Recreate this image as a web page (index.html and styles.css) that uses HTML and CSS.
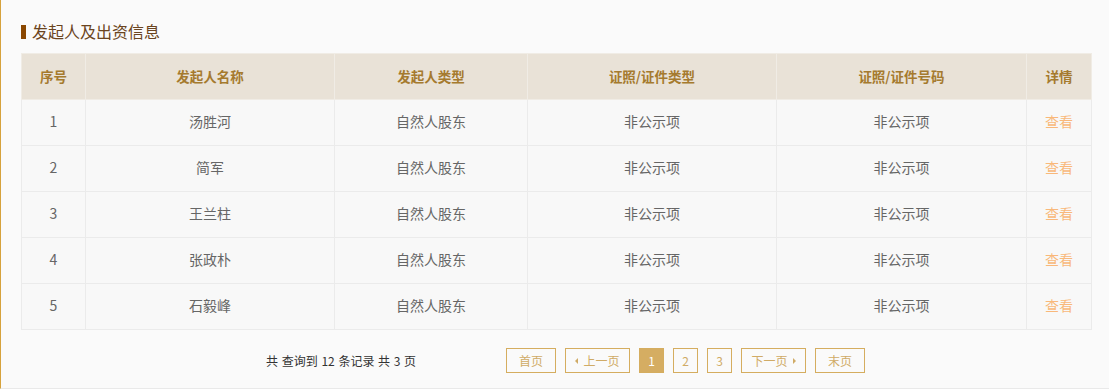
FILE: index.html
```html
<!DOCTYPE html>
<html lang="zh-CN">
<head>
<meta charset="utf-8">
<title>发起人及出资信息</title>
<link rel="stylesheet" href="styles.css">
</head>
<body>
<div class="panel">
  <h2 class="title"><span class="marker"></span>发起人及出资信息</h2>
  <table class="grid">
    <colgroup>
      <col class="c1"><col class="c2"><col class="c3"><col class="c4"><col class="c5"><col class="c6">
    </colgroup>
    <thead>
      <tr><th>序号</th><th>发起人名称</th><th>发起人类型</th><th>证照/证件类型</th><th>证照/证件号码</th><th>详情</th></tr>
    </thead>
    <tbody>
      <tr><td>1</td><td>汤胜河</td><td>自然人股东</td><td>非公示项</td><td>非公示项</td><td><a class="view">查看</a></td></tr>
      <tr><td>2</td><td>简军</td><td>自然人股东</td><td>非公示项</td><td>非公示项</td><td><a class="view">查看</a></td></tr>
      <tr><td>3</td><td>王兰柱</td><td>自然人股东</td><td>非公示项</td><td>非公示项</td><td><a class="view">查看</a></td></tr>
      <tr><td>4</td><td>张政朴</td><td>自然人股东</td><td>非公示项</td><td>非公示项</td><td><a class="view">查看</a></td></tr>
      <tr><td>5</td><td>石毅峰</td><td>自然人股东</td><td>非公示项</td><td>非公示项</td><td><a class="view">查看</a></td></tr>
    </tbody>
  </table>
  <div class="pager">
    <span class="count">共 查询到 12 条记录 共 3 页</span>
    <div class="pages">
      <a class="pg w50">首页</a>
      <a class="pg w65"><span class="tri tri-l"></span>上一页</a>
      <a class="pg num active">1</a>
      <a class="pg num">2</a>
      <a class="pg num">3</a>
      <a class="pg w65">下一页<span class="tri tri-r"></span></a>
      <a class="pg w50">末页</a>
    </div>
  </div>
</div>
</body>
</html>
```
FILE: styles.css
```css
html, body {
  margin: 0;
  padding: 0;
  background: #fafafa;
}
body {
  font-family: "Noto Sans CJK SC", "Liberation Sans", sans-serif;
  width: 1109px;
  height: 389px;
  overflow: hidden;
}
.panel {
  box-sizing: border-box;
  height: 389px;
  border-left: 1px solid #d6a23c;
  border-bottom: 1px solid #e9e9e9;
  padding: 21px 18px 0 20px;
}
.title {
  margin: 0;
  display: flex;
  align-items: center;
  height: 20px;
  font-size: 16px;
  font-weight: normal;
  color: #6a4420;
  line-height: 20px;
}
.title-text {
  display: block;
}
.marker {
  width: 5px;
  height: 14px;
  background: #8a4700;
  margin-right: 6px;
  margin-top: 2px;
}
.grid {
  margin-top: 12px;
  width: 1070px;
  border-collapse: collapse;
  table-layout: fixed;
}
.c1 { width: 64px; }
.c2 { width: 249px; }
.c3 { width: 193px; }
.c4 { width: 249px; }
.c5 { width: 250px; }
.c6 { width: 65px; }
.grid th, .grid td {
  border: 1px solid #ebebeb;
  text-align: center;
  padding: 0 0 3px 0;
  height: 46px;
  box-sizing: border-box;
  line-height: 20px;
  font-size: 14px;
}
.grid th {
  background: #e9e2d7;
  color: #a57a2e;
  font-weight: bold;
  font-size: 13.5px;
  border-color: #f0ece5;
  padding-bottom: 2px;
}
.grid td {
  background: #f8f8f8;
  color: #666;
}
.view {
  color: #f9b87a;
  cursor: pointer;
}
.pager {
  display: flex;
  align-items: center;
  padding-left: 245px;
  margin-top: 18px;
}
.count {
  width: 240px;
  font-size: 12px;
  color: #333;
  line-height: 25px;
  word-spacing: 1px;
}
.pages {
  display: flex;
  gap: 9px;
}
.pg {
  box-sizing: border-box;
  height: 25px;
  border: 1px solid #d5ad5f;
  color: #d0ab66;
  font-size: 12px;
  line-height: 23px;
  text-align: center;
  display: flex;
  align-items: center;
  justify-content: center;
  cursor: pointer;
}
.w50 { width: 50px; }
.w65 { width: 65px; }
.num { width: 25px; }
.active {
  background: #d5ad62;
  color: #fff;
}
.tri {
  width: 0;
  height: 0;
  border-top: 3px solid transparent;
  border-bottom: 3px solid transparent;
}
.tri-l {
  border-right: 3px solid #d0ab66;
  margin-right: 5px;
}
.tri-r {
  border-left: 3px solid #d0ab66;
  margin-left: 5px;
}
```
